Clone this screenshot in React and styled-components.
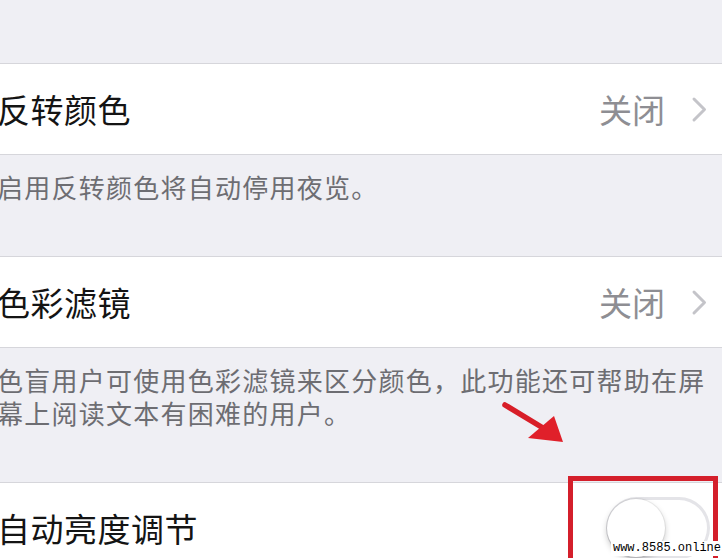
import React from 'react'
import styled, { createGlobalStyle } from 'styled-components'

const GlobalStyle = createGlobalStyle`
  html, body {
    margin: 0;
    padding: 0;
    background: #efeff4;
    overflow: hidden;
  }
  body {
    font-family: "Noto Sans CJK SC", "Noto Sans", sans-serif;
  }
`

const Screen = styled.div`
  position: relative;
  width: 722px;
  height: 558px;
  overflow: hidden;
  background: #efeff4;
  padding-top: 63px;
  box-sizing: border-box;
`

const Group = styled.div`
  background: #ffffff;
  border-top: 1px solid #d6d6db;
  border-bottom: 1px solid #d6d6db;
`

const Row = styled.div`
  display: flex;
  align-items: center;
  height: 90px;
  padding-right: ${p => p.$padRight || 14}px;
`

const Title = styled.div`
  flex: 1;
  margin-left: -3px;
  font-size: 33px;
  color: #141414;
  letter-spacing: 0.5px;
`

const Value = styled.div`
  font-size: 33px;
  color: #8e8e93;
  margin-right: 26px;
`

const Chevron = styled.svg`
  width: 17px;
  height: 27px;
  display: block;
`

const Footer = styled.div`
  padding: 15px 6px 53px 0;
  margin-left: -3px;
  font-size: 26px;
  line-height: 33px;
  color: #6d6d72;
  letter-spacing: 1.25px;
  white-space: nowrap;
`

const Switch = styled.div`
  position: relative;
  width: 104px;
  height: 62px;
  border-radius: 31px;
  background: #ffffff;
  box-shadow: inset 0 0 0 3px #e4e4e8;
`

const Knob = styled.div`
  position: absolute;
  left: 1px;
  top: 2px;
  width: 58px;
  height: 58px;
  border-radius: 50%;
  background: #ffffff;
  box-shadow: 0 3px 6px rgba(0, 0, 0, 0.22), 0 0 0 1px rgba(0, 0, 0, 0.06);
`

const Highlight = styled.div`
  position: absolute;
  left: 568px;
  top: 476px;
  width: 150px;
  height: 100px;
  border: 5px solid #d41f2b;
  box-sizing: border-box;
`

const Arrow = styled.svg`
  position: absolute;
  left: 498px;
  top: 398px;
  width: 72px;
  height: 52px;
`

const Watermark = styled.div`
  position: absolute;
  right: 0;
  bottom: 2px;
  padding: 0 1px 0 2px;
  background: #ffffff;
  font-family: "Liberation Mono", "DejaVu Sans Mono", monospace;
  font-size: 12px;
  line-height: 15px;
  color: #000000;
`

const ChevronIcon = () => (
  <Chevron viewBox="0 0 17 27">
    <path
      d="M3 3 L13.5 13.5 L3 24"
      fill="none"
      stroke="#c4c4c9"
      strokeWidth="3"
      strokeLinecap="round"
      strokeLinejoin="round"
    />
  </Chevron>
)

const LinkRow = ({ title, value }) => (
  <Group>
    <Row>
      <Title>{title}</Title>
      <Value>{value}</Value>
      <ChevronIcon />
    </Row>
  </Group>
)

export default function App() {
  return (
    <Screen>
      <GlobalStyle />
      <LinkRow title="反转颜色" value="关闭" />
      <Footer>启用反转颜色将自动停用夜览。</Footer>

      <LinkRow title="色彩滤镜" value="关闭" />
      <Footer>
        色盲用户可使用色彩滤镜来区分颜色，此功能还可帮助在屏
        <br />
        幕上阅读文本有困难的用户。
      </Footer>

      <Group>
        <Row $padRight={12}>
          <Title>自动亮度调节</Title>
          <Switch>
            <Knob />
          </Switch>
        </Row>
      </Group>

      <Arrow viewBox="0 0 72 52">
        <line
          x1="7"
          y1="7"
          x2="50"
          y2="33"
          stroke="#d81e28"
          strokeWidth="5.5"
          strokeLinecap="round"
        />
        <polygon points="30,40 56,18 65,44" fill="#e0202a" />
      </Arrow>
      <Highlight />
      <Watermark>www.8585.online</Watermark>
    </Screen>
  )
}
